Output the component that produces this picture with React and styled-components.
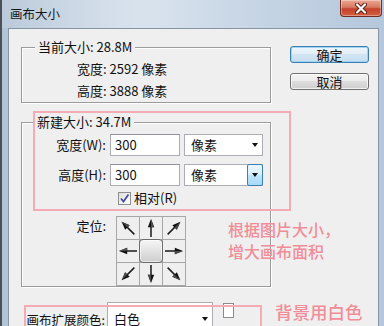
import React from "react";
import styled, { createGlobalStyle, css } from "styled-components";

const GlobalStyle = createGlobalStyle`
  html, body { margin: 0; padding: 0; background: #fff; }
  body { font-family: "Noto Sans CJK SC", "Liberation Sans", sans-serif; color: #111; }
  * { box-sizing: border-box; }
`;

const Window = styled.div`
  position: relative;
  width: 384px;
  height: 326px;
  overflow: hidden;
  display: flex;
  flex-direction: column;
  border-left: 2px solid #4c5159;
  background: linear-gradient(90deg, #b3c4d6 0%, #c6d5e5 40%, #bccde0 75%, #b4c7dc 100%);
`;

const TitleBar = styled.div`
  height: 28px;
  flex: none;
  display: flex;
  justify-content: space-between;
  align-items: flex-start;
  padding-left: 8px;
  background: linear-gradient(90deg, rgba(255,255,255,0.1) 0%, rgba(255,255,255,0.35) 35%, rgba(255,255,255,0.15) 60%, rgba(255,255,255,0) 100%);
`;

const Title = styled.div`
  font-size: 12.5px;
  line-height: 16px;
  padding-top: 6px;
  color: #151515;
`;

const CloseButton = styled.div`
  width: 42px;
  height: 17px;
  margin-right: 2px;
  border: 1px solid #6e2c24;
  border-top: none;
  border-radius: 0 0 4px 4px;
  background: linear-gradient(180deg, #e9a794 0%, #d87a63 45%, #c4412b 55%, #d1603f 100%);
  box-shadow: inset 0 0 0 1px rgba(255,255,255,0.35);
  display: flex;
  align-items: center;
  justify-content: center;
`;

const FrameBody = styled.div`
  flex: 1;
  display: flex;
  padding: 0 5px 0 6px;
  min-height: 0;
`;

const Content = styled.div`
  flex: 1;
  background: #efefef;
  border: 1px solid #8595a6;
  border-bottom: none;
  display: flex;
  gap: 19px;
  padding: 17px 0 0 12px;
  overflow: hidden;
`;

const LeftColumn = styled.div`
  width: 250px;
  flex: none;
  display: flex;
  flex-direction: column;
`;

const ButtonColumn = styled.div`
  width: 79px;
  flex: none;
  display: flex;
  flex-direction: column;
  gap: 10px;
`;

const DialogButton = styled.div`
  height: 17px;
  border-radius: 3px;
  font-size: 13px;
  line-height: 15px;
  text-align: center;
  color: #111;
  border: 1px solid #707070;
  background: linear-gradient(180deg, #f4f4f4 0%, #ebebeb 50%, #dddddd 50%, #cfcfcf 100%);
  box-shadow: inset 0 0 0 1px rgba(255,255,255,0.7);
  ${(p) =>
    p.$default &&
    css`
      border-color: #3c7fb1;
      background: linear-gradient(180deg, #eef6fc 0%, #e1edf6 50%, #d2e5f3 50%, #c6def0 100%);
      box-shadow: inset 0 0 0 1px #9fd4f4;
    `}
`;

const Group = styled.div`
  position: relative;
  width: 250px;
  height: ${(p) => p.$height}px;
  margin-top: ${(p) => p.$top}px;
  border: 1px solid #9b9b9b;
  box-shadow: inset 1px 1px 0 #fff, 1px 1px 0 #fff;
`;

const Legend = styled.div`
  position: absolute;
  top: -9px;
  left: ${(p) => p.$left}px;
  padding: 0 3px;
  background: #efefef;
  font-size: 13px;
  line-height: 16px;
  white-space: nowrap;
`;

const InfoBlock = styled.div`
  padding: 10px 0 0 55px;
  font-size: 13px;
  line-height: 22px;
`;

const FieldRow = styled.div`
  display: grid;
  grid-template-columns: 84px 70px 79px;
  column-gap: 4px;
  align-items: center;
  height: ${(p) => p.$height || 22}px;
  margin-top: ${(p) => p.$top}px;
`;

const FieldLabel = styled.div`
  font-size: 13px;
  line-height: 16px;
  text-align: right;
  white-space: nowrap;
  align-self: ${(p) => (p.$top ? "start" : "center")};
  padding-top: ${(p) => (p.$top ? 2 : 0)}px;
`;

const TextInput = styled.div`
  height: 22px;
  background: #fff;
  border: 1px solid #abadb3;
  border-top-color: #8e9197;
  font-size: 13px;
  line-height: 20px;
  padding-left: 4px;
  color: #111;
`;

const Select = styled.div`
  height: ${(p) => p.$height || 22}px;
  width: ${(p) => p.$width || 79}px;
  display: flex;
  background: #fff;
  border: 1px solid #abadb3;
  font-size: 13px;
  line-height: ${(p) => (p.$height || 22) - 2}px;
`;

const SelectText = styled.div`
  flex: 1;
  padding-left: 6px;
`;

const DropButton = styled.div`
  width: 15px;
  display: flex;
  align-items: center;
  justify-content: center;
  ${(p) =>
    p.$active &&
    css`
      margin: -1px -1px -1px 0;
      width: 16px;
      border: 1px solid #3c7fb1;
      border-radius: 2px;
      background: linear-gradient(180deg, #eaf6fd 0%, #d9f0fc 50%, #bee6fd 50%, #a7d9f5 100%);
    `}
`;

const Caret = styled.span`
  width: 0;
  height: 0;
  border-left: 3.5px solid transparent;
  border-right: 3.5px solid transparent;
  border-top: 4px solid #111;
`;

const CheckCell = styled.label`
  grid-column: 2 / 4;
  display: flex;
  align-items: center;
  gap: 3px;
  padding-left: 8px;
  font-size: 13px;
  line-height: 16px;
`;

const CheckBox = styled.span`
  width: 13px;
  height: 13px;
  border: 1px solid #8e8f8f;
  background: linear-gradient(135deg, #dcdcdc 0%, #f6f6f6 70%, #fff 100%);
  display: flex;
  align-items: center;
  justify-content: center;
`;

const AnchorGrid = styled.div`
  grid-column: 2 / 4;
  margin-left: 6px;
  width: 70px;
  display: grid;
  grid-template-columns: repeat(3, 22px);
  grid-auto-rows: 22px;
  gap: 1px;
  padding: 1px;
  background: #a7a7a7;
  align-self: start;
`;

const AnchorCell = styled.div`
  background: #efefef;
  display: flex;
  align-items: center;
  justify-content: center;
  position: relative;
`;

const CenterKnob = styled.div`
  width: 24px;
  height: 24px;
  margin: -1px;
  border: 1px solid #6b6b6b;
  border-radius: 4px;
  background: linear-gradient(180deg, #f6f6f6 0%, #e2e2e2 50%, #cdcdcd 100%);
  box-shadow: inset 0 0 0 1px rgba(255, 255, 255, 0.6);
  z-index: 1;
`;

const ExtendRow = styled.div`
  display: flex;
  align-items: flex-start;
  margin-top: 15px;
`;

const ExtendLabel = styled.div`
  width: 86px;
  text-align: right;
  padding-right: 2px;
  font-size: 12.5px;
  line-height: 36px;
  white-space: nowrap;
`;

const Swatch = styled.div`
  width: 11px;
  height: 15px;
  margin: 1px 0 0 10px;
  background: #fff;
  border: 1px solid #8a8a8a;
`;

const NoteFrame = styled.div`
  position: absolute;
  left: ${(p) => p.$x}px;
  top: ${(p) => p.$y}px;
  width: ${(p) => p.$w}px;
  height: ${(p) => p.$h}px;
  border: 2px solid #f5abb4;
  pointer-events: none;
`;

const NoteText = styled.div`
  position: absolute;
  left: ${(p) => p.$x}px;
  top: ${(p) => p.$y}px;
  font-size: ${(p) => p.$size}px;
  line-height: 22px;
  font-weight: 500;
  color: #f08d99;
  white-space: nowrap;
`;

const Arrow = ({ angle }) => (
  <svg width="22" height="22" viewBox="0 0 22 22">
    <g transform={`rotate(${angle} 11 11)`}>
      <rect x="10.25" y="8" width="1.5" height="12" fill="#1a1a1a" />
      <polygon points="11,2 7.8,10.2 14.2,10.2" fill="#111" />
      <polygon points="11,2 11,10.2 14.2,10.2" fill="#4a4a4a" />
    </g>
  </svg>
);

const CloseIcon = () => (
  <svg width="12" height="11" viewBox="0 0 12 11">
    <path d="M2 1.5 L10 9.5 M10 1.5 L2 9.5" stroke="#5a1c14" strokeWidth="4" strokeLinecap="round" />
    <path d="M2 1.5 L10 9.5 M10 1.5 L2 9.5" stroke="#fff" strokeWidth="2.2" strokeLinecap="round" />
  </svg>
);

const CheckIcon = () => (
  <svg width="11" height="11" viewBox="0 0 11 11">
    <path d="M2 5.5 L4.5 8.5 L9.5 1.5" fill="none" stroke="#4b4b9c" strokeWidth="1.8" />
  </svg>
);

const anchors = [-45, 0, 45, -90, null, 90, -135, 180, 135];

export default function App() {
  return (
    <>
      <GlobalStyle />
      <Window>
        <TitleBar>
          <Title>画布大小</Title>
          <CloseButton>
            <CloseIcon />
          </CloseButton>
        </TitleBar>
        <FrameBody>
          <Content>
            <LeftColumn>
              <Group $height={58} $top={1}>
                <Legend $left={13}>当前大小: 28.8M</Legend>
                <InfoBlock>
                  <div>宽度: 2592 像素</div>
                  <div>高度: 3888 像素</div>
                </InfoBlock>
              </Group>
              <Group $height={173} $top={19}>
                <Legend $left={12}>新建大小: 34.7M</Legend>
                <FieldRow $top={11}>
                  <FieldLabel>宽度(W):</FieldLabel>
                  <TextInput>300</TextInput>
                  <Select>
                    <SelectText>像素</SelectText>
                    <DropButton>
                      <Caret />
                    </DropButton>
                  </Select>
                </FieldRow>
                <FieldRow $top={8}>
                  <FieldLabel>高度(H):</FieldLabel>
                  <TextInput>300</TextInput>
                  <Select>
                    <SelectText>像素</SelectText>
                    <DropButton $active>
                      <Caret />
                    </DropButton>
                  </Select>
                </FieldRow>
                <FieldRow $top={4} $height={16}>
                  <CheckCell>
                    <CheckBox>
                      <CheckIcon />
                    </CheckBox>
                    相对(R)
                  </CheckCell>
                </FieldRow>
                <FieldRow $top={10} $height={70}>
                  <FieldLabel $top>定位:</FieldLabel>
                  <AnchorGrid>
                    {anchors.map((a, i) => (
                      <AnchorCell key={i}>
                        {a === null ? <CenterKnob /> : <Arrow angle={a} />}
                      </AnchorCell>
                    ))}
                  </AnchorGrid>
                </FieldRow>
              </Group>
              <ExtendRow>
                <ExtendLabel>画布扩展颜色:</ExtendLabel>
                <Select $width={106} $height={34}>
                  <SelectText>白色</SelectText>
                  <DropButton>
                    <Caret />
                  </DropButton>
                </Select>
                <Swatch />
              </ExtendRow>
            </LeftColumn>
            <ButtonColumn>
              <DialogButton $default>确定</DialogButton>
              <DialogButton>取消</DialogButton>
            </ButtonColumn>
          </Content>
        </FrameBody>
        <NoteFrame $x={31} $y={111} $w={258} $h={100} />
        <NoteText $x={226} $y={218} $size={16}>
          根据图片大小，
          <br />
          增大画布面积
        </NoteText>
        <NoteFrame $x={22} $y={305} $w={238} $h={40} />
        <NoteText $x={273} $y={301} $size={17.5}>
          背景用白色
        </NoteText>
      </Window>
    </>
  );
}
